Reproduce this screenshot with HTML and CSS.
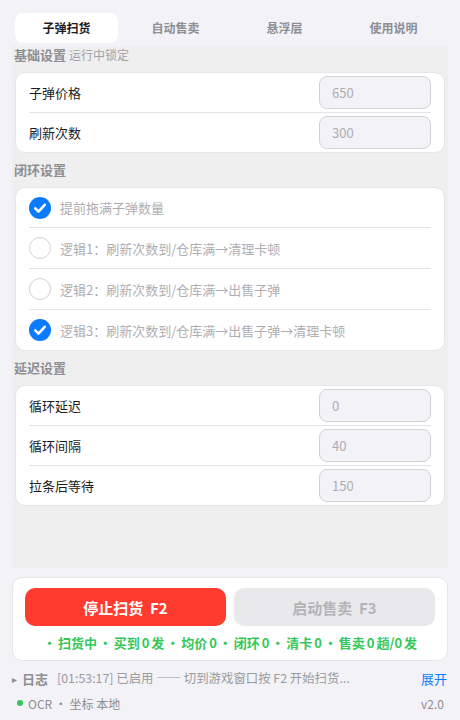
FILE: index.html
```html
<!DOCTYPE html>
<html lang="zh-CN">
<head>
    <meta charset="UTF-8">
    <meta name="viewport" content="width=device-width, initial-scale=1.0">
    <title>子弹扫货</title>
    <link rel="stylesheet" href="styles.css">
</head>
<body>
    <div class="tabs">
        <div class="tab active">子弹扫货</div>
        <div class="tab">自动售卖</div>
        <div class="tab">悬浮层</div>
        <div class="tab">使用说明</div>
    </div>

    <div class="scroll">
        <div class="section-title first">基础设置 <span class="hint">运行中锁定</span></div>
        <div class="card">
            <div class="row">
                <span class="label">子弹价格</span>
                <input class="num" type="text" value="650" readonly>
            </div>
            <div class="row">
                <span class="label">刷新次数</span>
                <input class="num" type="text" value="300" readonly>
            </div>
        </div>

        <div class="section-title">闭环设置</div>
        <div class="card">
            <div class="row check-row">
                <span class="check on"><svg width="22" height="22" viewBox="0 0 22 22"><path d="M6.3 11.4l3.2 3.2 6.2-6.8" fill="none" stroke="#fff" stroke-width="2.6" stroke-linecap="round" stroke-linejoin="round"/></svg></span>
                <span class="check-text">提前拖满子弹数量</span>
            </div>
            <div class="row check-row">
                <span class="check"></span>
                <span class="check-text">逻辑1：刷新次数到/仓库满→清理卡顿</span>
            </div>
            <div class="row check-row">
                <span class="check"></span>
                <span class="check-text">逻辑2：刷新次数到/仓库满→出售子弹</span>
            </div>
            <div class="row check-row">
                <span class="check on"><svg width="22" height="22" viewBox="0 0 22 22"><path d="M6.3 11.4l3.2 3.2 6.2-6.8" fill="none" stroke="#fff" stroke-width="2.6" stroke-linecap="round" stroke-linejoin="round"/></svg></span>
                <span class="check-text">逻辑3：刷新次数到/仓库满→出售子弹→清理卡顿</span>
            </div>
        </div>

        <div class="section-title">延迟设置</div>
        <div class="card">
            <div class="row">
                <span class="label">循环延迟</span>
                <input class="num" type="text" value="0" readonly>
            </div>
            <div class="row">
                <span class="label">循环间隔</span>
                <input class="num" type="text" value="40" readonly>
            </div>
            <div class="row">
                <span class="label">拉条后等待</span>
                <input class="num" type="text" value="150" readonly>
            </div>
        </div>
    </div>

    <div class="control-card">
        <div class="btn-group">
            <button class="btn btn-stop">停止扫货&nbsp;&nbsp;F2</button>
            <button class="btn btn-off">启动售卖&nbsp;&nbsp;F3</button>
        </div>
        <div class="status">• 扫货中 • 买到 0 发 • 均价 0 • 闭环 0 • 清卡 0 • 售卖 0 趟/0 发</div>
    </div>

    <div class="log-row">
        <span class="caret">▸</span>
        <span class="log-title">日志</span>
        <span class="log-text">[01:53:17] 已启用 —— 切到游戏窗口按 F2 开始扫货...</span>
        <span class="log-more">展开</span>
    </div>

    <div class="footer">
        <span class="dot"></span>
        <span class="footer-text">OCR · 坐标 本地</span>
        <span class="version">v2.0</span>
    </div>
</body>
</html>
```

FILE: styles.css
```css
body {
    margin: 0;
    width: 460px;
    height: 720px;
    overflow: hidden;
    background-color: #f2f2f7;
    font-family: "Noto Sans CJK SC", "Noto Sans", sans-serif;
    color: #1c1c1e;
}
.tabs {
    display: grid;
    grid-template-columns: repeat(4, 1fr);
    gap: 6px;
    margin: 10px 12px 0;
    padding: 3px;
}
.tab {
    height: 30px;
    line-height: 30px;
    text-align: center;
    font-size: 12px;
    font-weight: bold;
    color: #8e8e93;
    border-radius: 8px;
}
.tab.active {
    background-color: white;
    color: #1c1c1e;
}
.scroll {
    margin: 0 12px;
    height: 522px;
    padding: 0 3px;
    background-color: #efeff0;
    overflow: hidden;
}
.section-title {
    margin: 8px 0 8px -1px;
    height: 18px;
    line-height: 18px;
    font-size: 13px;
    font-weight: bold;
    color: #8e8e93;
}
.section-title.first {
    margin-top: 0;
}
.section-title.delay {
    margin-top: 6px;
}
.hint {
    font-size: 12px;
    font-weight: normal;
    color: #a1a1a6;
}
.card {
    background-color: white;
    border: 1px solid #e5e5ea;
    border-radius: 10px;
    padding: 0 13px;
}
.row {
    display: flex;
    align-items: center;
    justify-content: space-between;
    height: 39px;
    border-bottom: 1px solid #e3e3e8;
}
.row:last-child {
    border-bottom: none;
}
.label {
    font-size: 13px;
    color: #1c1c1e;
}
.num {
    width: 112px;
    height: 33px;
    box-sizing: border-box;
    padding: 0 12px;
    border: 1px solid #d1d1d6;
    border-radius: 8px;
    background-color: #f2f2f7;
    font-family: "Noto Sans CJK SC", "Noto Sans", sans-serif;
    font-size: 13px;
    color: #aeaeb2;
    outline: none;
}
.check-row {
    justify-content: flex-start;
    gap: 9px;
    height: 40px;
}
.check-row:first-child {
    height: 39px;
}
.check {
    width: 22px;
    height: 22px;
    box-sizing: border-box;
    border: 1.5px solid #d1d1d6;
    border-radius: 50%;
    display: flex;
    align-items: center;
    justify-content: center;
    flex-shrink: 0;
}
.check.on {
    border: none;
    background-color: #0a7aff;
}
.check-text {
    font-size: 13px;
    color: #aeaeb2;
}
.control-card {
    margin: 9px 12px 0;
    background-color: white;
    border: 1px solid #e5e5ea;
    border-radius: 10px;
    padding: 10px 12px 8px;
}
.btn-group {
    display: flex;
    gap: 8px;
}
.btn {
    flex: 1;
    height: 38px;
    border: none;
    border-radius: 10px;
    font-family: "Noto Sans CJK SC", "Noto Sans", sans-serif;
    font-size: 15px;
    font-weight: bold;
}
.btn-stop {
    background-color: #ff3b30;
    color: white;
}
.btn-off {
    background-color: #e9e9ec;
    color: #b4b4b8;
}
.status {
    margin-top: 8px;
    height: 18px;
    line-height: 18px;
    text-align: center;
    font-size: 13px;
    font-weight: bold;
    color: #34c759;
    white-space: nowrap;
    word-spacing: -1px;
}
.log-row {
    display: flex;
    align-items: center;
    height: 20px;
    margin-top: 7px;
    padding: 0 13px 0 12px;
    font-size: 12px;
    color: #8e8e93;
}
.caret {
    font-size: 10px;
    margin-right: 5px;
}
.log-title {
    font-size: 13px;
    font-weight: bold;
    margin-right: 9px;
}
.log-text {
    flex: 1;
    font-size: 12.4px;
    color: #9a9aa0;
    white-space: nowrap;
}
.log-more {
    color: #0a7aff;
    font-size: 13px;
}
.footer {
    display: flex;
    align-items: center;
    height: 20px;
    margin-top: 5px;
    padding: 0 16px 0 17px;
    font-size: 12px;
    color: #8e8e93;
}
.dot {
    width: 6px;
    height: 6px;
    border-radius: 50%;
    background-color: #34c759;
    margin-right: 5px;
}
.footer-text {
    flex: 1;
}
```
